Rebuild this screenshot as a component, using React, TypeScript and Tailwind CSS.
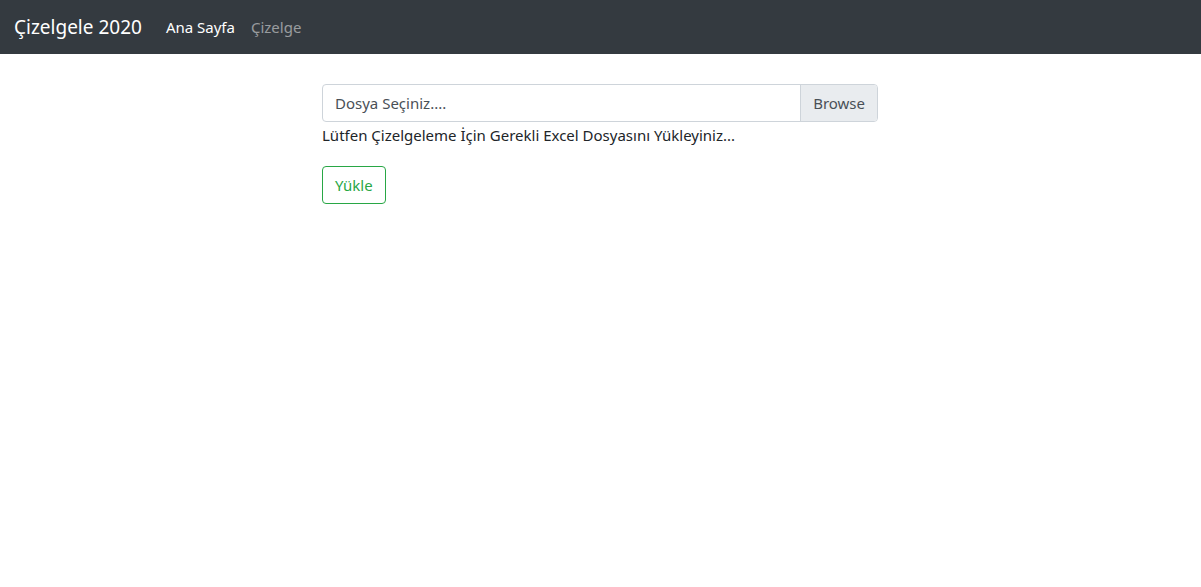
export default function App() {
  return (
    <div className="min-h-[587px] bg-white text-[#212529]" style={{ fontFamily: '"Noto Sans", "Open Sans", sans-serif' }}>
      <nav className="flex h-[54px] items-center bg-[#343a40] px-[14px]">
        <a className="mr-[16px] text-[19px] text-white">Çizelgele 2020</a>
        <div className="flex items-center">
          <a className="px-[8px] text-[15px] text-white">Ana Sayfa</a>
          <a className="px-[8px] text-[15px] text-white/50">Çizelge</a>
        </div>
      </nav>
      <main className="pt-[30px]">
        <form className="ml-[322px] w-[556px]" onSubmit={(e) => e.preventDefault()}>
          <div className="flex h-[38px] overflow-hidden rounded-[4px] border border-[#ced4da]">
            <div className="flex flex-1 items-center px-[12px] text-[15px] text-[#495057]">Dosya Seçiniz....</div>
            <div className="flex items-center border-l border-[#ced4da] bg-[#e9ecef] px-[12px] text-[15px] text-[#495057]">Browse</div>
          </div>
          <p className="mt-[1px] text-[15px] leading-[24px]">Lütfen Çizelgeleme İçin Gerekli Excel Dosyasını Yükleyiniz...</p>
          <button
            type="submit"
            className="mt-[19px] h-[38px] rounded-[4px] border border-[#28a745] px-[12px] text-[15px] text-[#28a745]"
          >
            Yükle
          </button>
        </form>
      </main>
    </div>
  );
}
